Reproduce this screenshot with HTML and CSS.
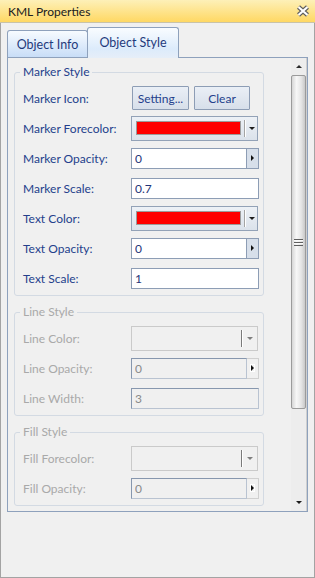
FILE: index.html
```html
<!DOCTYPE html>
<html lang="en">
<head>
  <meta charset="UTF-8" />
  <title>KML Properties</title>
  <link rel="stylesheet" href="styles.css">
</head>
<body>
  <div class="window">
    <div class="titlebar">
      <span class="title">KML Properties</span>
      <svg class="close" width="14" height="12" viewBox="0 0 14 12">
        <path d="M2.5 2 L11.5 10 M11.5 2 L2.5 10" stroke="#5e5e5e" stroke-width="4.4" />
        <path d="M2.5 2 L11.5 10 M11.5 2 L2.5 10" stroke="#fff" stroke-width="2.2" />
      </svg>
    </div>

    <div class="main">
      <div class="tabs">
        <div class="tab">Object Info</div>
        <div class="tab active">Object Style</div>
      </div>

      <div class="panel">
        <div class="content">
          <fieldset class="group">
            <legend>Marker Style</legend>
            <div class="row">
              <label>Marker Icon:</label>
              <div class="buttons">
                <button class="btn setting">Setting...</button>
                <button class="btn clear">Clear</button>
              </div>
            </div>
            <div class="row">
              <label>Marker Forecolor:</label>
              <div class="combo">
                <span class="swatch"></span>
                <span class="divider"></span>
                <span class="arrow-down"></span>
              </div>
            </div>
            <div class="row">
              <label>Marker Opacity:</label>
              <div class="spin">
                <input type="text" value="0" />
                <span class="spin-btn"><span class="arrow-right"></span></span>
              </div>
            </div>
            <div class="row">
              <label>Marker Scale:</label>
              <input class="field" type="text" value="0.7" />
            </div>
            <div class="row">
              <label>Text Color:</label>
              <div class="combo">
                <span class="swatch"></span>
                <span class="divider"></span>
                <span class="arrow-down"></span>
              </div>
            </div>
            <div class="row">
              <label>Text Opacity:</label>
              <div class="spin">
                <input type="text" value="0" />
                <span class="spin-btn"><span class="arrow-right"></span></span>
              </div>
            </div>
            <div class="row">
              <label>Text Scale:</label>
              <input class="field" type="text" value="1" />
            </div>
          </fieldset>

          <fieldset class="group disabled">
            <legend>Line Style</legend>
            <div class="row">
              <label>Line Color:</label>
              <div class="combo">
                <span class="divider"></span>
                <span class="arrow-down"></span>
              </div>
            </div>
            <div class="row">
              <label>Line Opacity:</label>
              <div class="spin">
                <input type="text" value="0" disabled />
                <span class="spin-btn"><span class="arrow-right"></span></span>
              </div>
            </div>
            <div class="row">
              <label>Line Width:</label>
              <input class="field" type="text" value="3" disabled />
            </div>
          </fieldset>

          <fieldset class="group disabled">
            <legend>Fill Style</legend>
            <div class="row">
              <label>Fill Forecolor:</label>
              <div class="combo">
                <span class="divider"></span>
                <span class="arrow-down"></span>
              </div>
            </div>
            <div class="row">
              <label>Fill Opacity:</label>
              <div class="spin">
                <input type="text" value="0" disabled />
                <span class="spin-btn"><span class="arrow-right"></span></span>
              </div>
            </div>
          </fieldset>
        </div>

        <div class="scrollbar">
          <div class="scroll-btn"><span class="arrow-up"></span></div>
          <div class="thumb">
            <span class="grip"></span>
          </div>
          <div class="track"></div>
          <div class="scroll-btn"><span class="arrow-down"></span></div>
        </div>
      </div>
    </div>
  </div>
</body>
</html>
```

FILE: styles.css
```css
body {
  margin: 0;
  font-family: Lato, 'Noto Sans', 'DejaVu Sans', sans-serif;
  font-size: 12px;
  background: #fff;
}
.window {
  width: 315px;
  height: 578px;
  box-sizing: border-box;
  border: 1px solid #a3a3a3;
  border-top: none;
  background: #f0f0f0;
  display: flex;
  flex-direction: column;
}
.titlebar {
  height: 22px;
  margin: 0 -1px;
  padding: 0 5px 0 8px;
  background: linear-gradient(#fdf0b8, #ffd863);
  border-bottom: 1px solid #c9c3a8;
  display: flex;
  align-items: center;
  justify-content: space-between;
  color: #202020;
}
.close {
  display: block;
}
.main {
  flex: 1;
  padding: 4px 6px 0;
}
.tabs {
  display: flex;
  align-items: flex-end;
  height: 30px;
}
.tab {
  box-sizing: border-box;
  height: 27px;
  width: 81px;
  border: 1px solid #8ea1bc;
  border-bottom: none;
  border-radius: 3px 3px 0 0;
  background: linear-gradient(#f7fbff, #c8ddf7);
  color: #1f3a7c;
  font-size: 12.5px;
  display: flex;
  align-items: center;
  justify-content: center;
}
.tab.active {
  width: 92px;
  height: 31px;
  margin-left: -1px;
  margin-bottom: -1px;
  padding-bottom: 1px;
  background: linear-gradient(#f9fcff, #dcebfb 70%, #e6eef8);
  position: relative;
  z-index: 1;
}
.panel {
  box-sizing: border-box;
  height: 455px;
  border: 1px solid #8ea1bc;
  background: #f0f0f0;
  display: flex;
}
.content {
  flex: 1;
  overflow: hidden;
  padding: 7px 0 0 6px;
}
.group {
  box-sizing: border-box;
  width: 250px;
  min-width: 0;
  margin: 0 0 9px;
  padding: 4px 5px 2px 8px;
  border: 1px solid #d3dae3;
  border-radius: 3px;
}
.group legend {
  padding: 0 3px;
  margin-left: -3px;
  line-height: 14px;
  color: #243f8c;
}
.row {
  display: flex;
  align-items: center;
  height: 30px;
}
.row label {
  width: 108px;
  flex: none;
  color: #243f8c;
}
.group.disabled legend,
.group.disabled label {
  color: #a9a9a9;
}
.buttons {
  display: flex;
  gap: 5px;
  padding-left: 1px;
}
.btn {
  box-sizing: border-box;
  height: 24px;
  padding: 0;
  border: 1px solid #8d9db5;
  border-radius: 1px;
  background: linear-gradient(#eaeff6, #d7dfea);
  font: inherit;
  color: #243f8c;
}
.setting {
  width: 57px;
}
.clear {
  width: 56px;
}
.combo {
  box-sizing: border-box;
  width: 128px;
  height: 25px;
  padding-left: 4px;
  border: 1px solid #93a2b7;
  background: linear-gradient(#edf1f6, #dbe2eb);
  display: flex;
  align-items: center;
}
.swatch {
  box-sizing: border-box;
  width: 105px;
  height: 14px;
  border: 1px solid #9c9c9c;
  background: #ff0000;
}
.divider {
  width: 1px;
  height: 17px;
  margin-left: 3px;
  background: #a4a4a4;
  box-shadow: 1px 0 0 #fff;
}
.combo .arrow-down {
  margin-left: 4px;
}
.arrow-down {
  width: 0;
  height: 0;
  border-left: 3px solid transparent;
  border-right: 3px solid transparent;
  border-top: 3px solid #1c1c1c;
}
.arrow-up {
  width: 0;
  height: 0;
  border-left: 3px solid transparent;
  border-right: 3px solid transparent;
  border-bottom: 3px solid #2a2a2a;
}
.arrow-right {
  width: 0;
  height: 0;
  border-top: 3px solid transparent;
  border-bottom: 3px solid transparent;
  border-left: 3px solid #111;
}
.group.disabled .combo {
  width: 128px;
  padding-left: 0;
  justify-content: flex-end;
  border-color: #cacaca;
  background: #f0f0f0;
}
.group.disabled .divider {
  margin: 0;
  background: #7a7a7a;
}
.group.disabled .arrow-down {
  margin: 0 4px 0 5px;
  border-top-color: #7e7e7e;
}
.spin {
  display: flex;
  width: 128px;
  height: 21px;
}
.spin input,
.field {
  box-sizing: border-box;
  height: 21px;
  margin: 0;
  padding: 0 3px;
  border: 1px solid #8d9db5;
  background: #fff;
  font: inherit;
  color: #1f3479;
  outline: none;
}
.spin input {
  flex: 1;
  min-width: 0;
}
.field {
  width: 128px;
}
.spin-btn {
  box-sizing: border-box;
  width: 12px;
  border: 1px solid #8d9db5;
  border-left: none;
  background: #d7dfea;
  display: flex;
  align-items: center;
  justify-content: center;
}
.group.disabled input {
  background: #f0f0f0;
  color: #8a8a8a;
  border-color: #8797ae #b9c3d1 #b9c3d1 #8797ae;
}
.group.disabled .spin-btn {
  border-color: #d0d0d0;
  background: #f0f0f0;
}
.group.disabled .arrow-right {
  outline: 1px solid #fff;
}
.scrollbar {
  width: 16px;
  display: flex;
  flex-direction: column;
  background: #ededed;
  box-shadow: inset -1px 0 0 #cfcfcf;
}
.scroll-btn {
  height: 17px;
  display: flex;
  align-items: center;
  justify-content: center;
  padding-right: 1px;
}
.thumb {
  box-sizing: border-box;
  width: 15px;
  height: 334px;
  border: 1px solid #9b9b9b;
  border-radius: 2px;
  background: linear-gradient(to right, #d6d6d6, #f7f7f7 35%, #e6e6e6 70%, #c9c9c9);
  display: flex;
  align-items: center;
  justify-content: center;
}
.grip {
  width: 9px;
  height: 7px;
  background: repeating-linear-gradient(#5f5f5f 0 1px, #fafafa 1px 2px, transparent 2px 3px);
}
.track {
  flex: 1;
}
```
